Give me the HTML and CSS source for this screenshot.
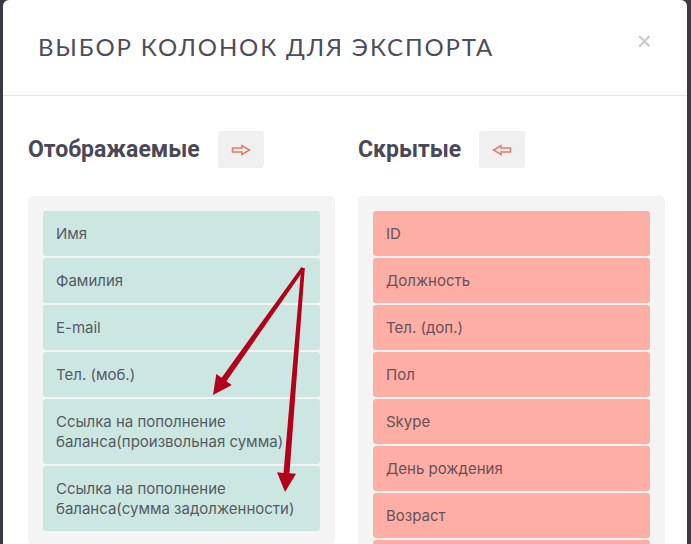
FILE: index.html
```html
<!DOCTYPE html>
<html lang="ru">
<head>
  <meta charset="UTF-8">
  <meta name="viewport" content="width=device-width, initial-scale=1.0">
  <title>Выбор колонок для экспорта</title>
  <link rel="stylesheet" href="styles.css">
</head>
<body>
  <div class="modal">
    <div class="modal-header">
      <h3 class="modal-title">Выбор колонок для экспорта</h3>
      <span class="close">&times;</span>
    </div>
    <div class="modal-body">
      <div class="column">
        <div class="column-head">
          <h4>Отображаемые</h4>
          <button class="move-btn" title="Скрыть">
            <svg width="20" height="12" viewBox="0 0 20 12"><path d="M1.5 4 H11 V1.5 L18.5 6 L11 10.5 V8 H1.5 Z" fill="none" stroke="#e8786a" stroke-width="1.5" stroke-linejoin="miter"/></svg>
          </button>
        </div>
        <div class="list">
          <div class="list-item shown">Имя</div>
          <div class="list-item shown">Фамилия</div>
          <div class="list-item shown">E-mail</div>
          <div class="list-item shown">Тел. (моб.)</div>
          <div class="list-item shown">Ссылка на пополнение баланса(произвольная сумма)</div>
          <div class="list-item shown">Ссылка на пополнение баланса(сумма задолженности)</div>
        </div>
      </div>
      <div class="column">
        <div class="column-head">
          <h4>Скрытые</h4>
          <button class="move-btn" title="Показать">
            <svg width="20" height="12" viewBox="0 0 20 12"><path d="M18.5 4 H9 V1.5 L1.5 6 L9 10.5 V8 H18.5 Z" fill="none" stroke="#e8786a" stroke-width="1.5" stroke-linejoin="miter"/></svg>
          </button>
        </div>
        <div class="list">
          <div class="list-item hidden">ID</div>
          <div class="list-item hidden">Должность</div>
          <div class="list-item hidden">Тел. (доп.)</div>
          <div class="list-item hidden">Пол</div>
          <div class="list-item hidden">Skype</div>
          <div class="list-item hidden">День рождения</div>
          <div class="list-item hidden">Возраст</div>
          <div class="list-item hidden"></div>
        </div>
      </div>
    </div>
  </div>

  <!-- annotation arrows drawn over the screenshot -->
  <svg class="marks" width="691" height="544" viewBox="0 0 691 544">
    <path d="M304.5 269 L226.4 381.2 L231.8 385 L213 395 L216.3 374 L221.6 377.8 L301.5 267 Z" fill="#b3001b"/>
    <path d="M304.8 268.1 L289.5 473.3 L296 473.8 L285 492 L277 472.3 L283.5 472.9 L301.2 267.9 Z" fill="#b3001b"/>
  </svg>
</body>
</html>
```

FILE: styles.css
```css
html, body {
  height: 100%;
}

body {
  margin: 0;
  background-color: #3b3942;
  font-family: 'Lato', 'Liberation Sans', sans-serif;
  overflow: hidden;
  position: relative;
}

.modal {
  width: 684px;
  margin-left: 3px;
  background-color: #fff;
  border-radius: 6px;
  height: 560px;
}

.modal-header {
  display: flex;
  justify-content: space-between;
  align-items: flex-start;
  padding: 32px 35px 0 35px;
  height: 63px;
  border-bottom: 1px solid #e5e5e5;
}

.modal-title {
  margin: 0;
  font-size: 24px;
  font-weight: 400;
  line-height: 30px;
  letter-spacing: 1.85px;
  text-transform: uppercase;
  color: #4d4c5c;
}

.close {
  font-family: 'Liberation Sans', sans-serif;
  font-size: 26px;
  line-height: 20px;
  color: #c9c9c9;
  margin-top: -1px;
}

.modal-body {
  display: grid;
  grid-template-columns: 307px 307px;
  column-gap: 23px;
  padding: 35px 24px 0 25px;
}

.column-head {
  display: flex;
  align-items: center;
  gap: 18px;
  margin-bottom: 28px;
}

.column-head h4 {
  margin: 0;
  font-family: 'Roboto', 'Liberation Sans', sans-serif;
  font-size: 23px;
  font-weight: 700;
  color: #4a4858;
}

.move-btn {
  width: 46px;
  height: 37px;
  border: none;
  border-radius: 3px;
  background-color: #f0f0f0;
  display: flex;
  align-items: center;
  justify-content: center;
  padding: 0;
}

.list {
  background-color: #f4f4f4;
  border-radius: 5px;
  padding: 15px 15px 12px 15px;
}

.list-item {
  padding: 12.5px 13px;
  min-height: 20px;
  font-family: 'Inter', 'Liberation Sans', sans-serif;
  font-size: 15px;
  line-height: 20px;
  border-radius: 3px;
  margin-bottom: 2px;
}

.shown {
  background-color: #cce7e1;
  color: #555a63;
}

.hidden {
  background-color: #feaea4;
  color: #65525a;
}

.marks {
  position: absolute;
  top: 0;
  left: 0;
  pointer-events: none;
}
```
